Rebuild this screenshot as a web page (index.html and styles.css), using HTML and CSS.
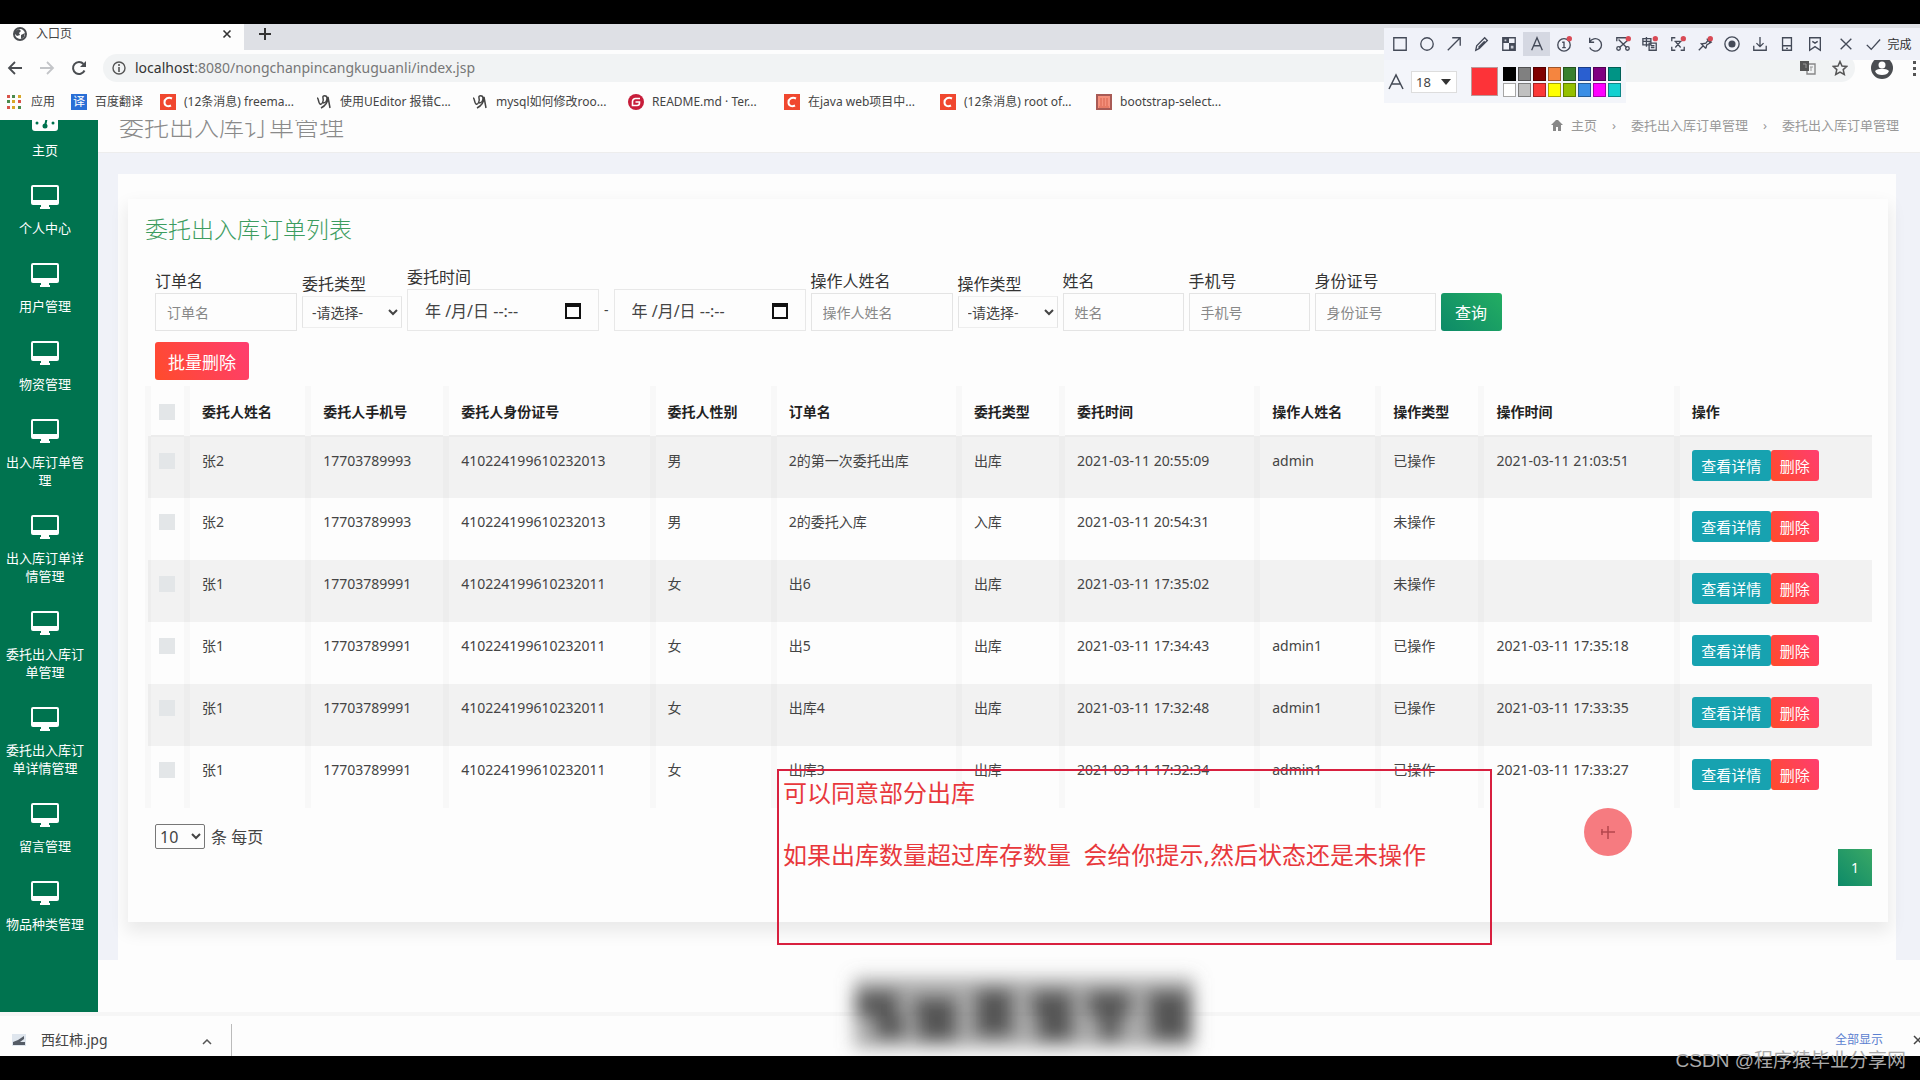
FILE: index.html
```html
<!DOCTYPE html>
<html lang="zh-CN">
<head>
  <meta charset="UTF-8" />
  <meta name="viewport" content="width=device-width, initial-scale=1.0"/>
  <title>入口页</title>
  <link rel="stylesheet" href="styles.css">
</head>
<body>
  <!-- shared icons -->
  <svg width="0" height="0" class="defs" aria-hidden="true">
    <symbol id="monitor" viewBox="0 0 28 24">
      <path fill="#fff" fill-rule="evenodd" d="M2 0h24a2 2 0 0 1 2 2v16a2 2 0 0 1-2 2h-8v2h1v2H9v-2h1v-2H2a2 2 0 0 1-2-2V2a2 2 0 0 1 2-2zm0 2v13h24V2z"/>
    </symbol>
    <symbol id="csdn" viewBox="0 0 16 16">
      <rect width="16" height="16" fill="#f0472f"/>
      <path d="M12 4.500C8 2.500 4.500 5 4.500 8.500S8 13 11 11.500" fill="none" stroke="#fff" stroke-width="2"/>
    </symbol>
    <symbol id="scribble" viewBox="0 0 16 16">
      <path d="M1 4c2 0 1 5 3 6s4-3 3-6 4-3 4 0-2 5-4 5M5 14C9 12 12 8 12 3l2 11" fill="none" stroke="#444" stroke-width="1.500"/>
    </symbol>
  </svg>

  <div class="letterbox"></div>

  <header class="browser">
    <div class="tabs">
      <div class="tab">
        <svg width="14" height="14" viewBox="0 0 14 14"><circle cx="7" cy="7" r="6" fill="#fff" stroke="#4a4d51" stroke-width="2"/><path d="M2 4l4-2 2 2-2 2 1 2-3 1-2-2zM8 8l4-2-1 4-3 2z" fill="#4a4d51"/></svg>
        <span>入口页</span>
        <button class="tab-close" aria-label="关闭标签"><svg width="10" height="10" viewBox="0 0 10 10"><path d="M1.500 1.500l7 7M8.500 1.500l-7 7" stroke="#333" stroke-width="1.600"/></svg></button>
      </div>
      <button class="tab-new" aria-label="新标签"><svg width="14" height="14" viewBox="0 0 14 14"><path d="M7 1v12M1 7h12" stroke="#333" stroke-width="2"/></svg></button>
    </div>
    <div class="toolbar">
      <button aria-label="后退"><svg width="16" height="16" viewBox="0 0 16 16"><path d="M15 8H2M8 2L2 8l6 6" fill="none" stroke="#4a4d51" stroke-width="1.800"/></svg></button>
      <button aria-label="前进"><svg width="16" height="16" viewBox="0 0 16 16"><path d="M1 8h13M8 2l6 6-6 6" fill="none" stroke="#c3c5c8" stroke-width="1.800"/></svg></button>
      <button aria-label="刷新"><svg width="16" height="16" viewBox="0 0 16 16"><path d="M13.500 10.500A6 6 0 1 1 12.500 4" fill="none" stroke="#4a4d51" stroke-width="2"/><path d="M15 1v6H9z" fill="#4a4d51"/></svg></button>
      <div class="address">
        <svg width="14" height="14" viewBox="0 0 14 14"><circle cx="7" cy="7" r="6" fill="none" stroke="#555" stroke-width="1.400"/><path d="M7 6v5M7 3v2" stroke="#555" stroke-width="1.600"/></svg>
        <span><b>localhost</b>:8080/nongchanpincangkuguanli/index.jsp</span>
        <div class="address-actions">
          <svg width="16" height="16" viewBox="0 0 16 16"><rect x="0" y="1" width="9" height="10" fill="#555"/><path d="M9 4h6v10H7v-3" fill="none" stroke="#888" stroke-width="1.400"/><path d="M3 4h3v4M10 7h3M11 7v4" stroke="#999" fill="none"/></svg>
          <svg width="16" height="16" viewBox="0 0 16 16"><path d="M8 1.500l2 4.500 4.800.4-3.600 3.200 1.100 4.900L8 12l-4.300 2.500 1.100-4.900L1.200 6.400 6 6z" fill="none" stroke="#555" stroke-width="1.500"/></svg>
        </div>
      </div>
      <div class="toolbar-right">
        <svg width="22" height="22" viewBox="0 0 22 22"><circle cx="11" cy="11" r="11" fill="#4a4d51"/><circle cx="11" cy="8" r="3.500" fill="#fff"/><path d="M4 14c3-3 11-3 14 0-1 3-4 4-7 4s-6-1-7-4z" fill="#fff"/></svg>
        <svg width="4" height="16" viewBox="0 0 4 16"><path d="M0 1h3v3H0zM0 7h3v3H0zM0 13h3v3H0z" fill="#555"/></svg>
      </div>
    </div>
    <nav class="bookmarks">
      <a class="bm-apps" href="#"><svg width="14" height="14" viewBox="0 0 14 14"><path d="M0 0h3v3H0zM0 11h3v3H0zM11 5h3v3h-3z" fill="#d9534a"/><path d="M5 0h3v3H5zM0 5h3v3H0zM11 11h3v3h-3z" fill="#4a8a4c"/><path d="M11 0h3v3h-3zM5 5h3v3H5zM5 11h3v3H5z" fill="#d8a728"/></svg>应用</a>
      <a class="bm-fanyi" href="#"><span class="fanyi">译</span>百度翻译</a>
      <a href="#"><svg width="16" height="16"><use href="#csdn"/></svg>(12条消息) freema...</a>
      <a href="#"><svg width="16" height="16"><use href="#scribble"/></svg>使用UEditor 报错C...</a>
      <a href="#"><svg width="16" height="16"><use href="#scribble"/></svg>mysql如何修改roo...</a>
      <a href="#"><svg width="16" height="16" viewBox="0 0 16 16"><circle cx="8" cy="8" r="8" fill="#c71d3a"/><path d="M12 4.500H7.500a3 3 0 0 0-3 3v4H9a2.500 2.500 0 0 0 2.500-2.500V8H7.500" fill="none" stroke="#fff" stroke-width="1.600"/></svg>README.md · Ter...</a>
      <a href="#"><svg width="16" height="16"><use href="#csdn"/></svg>在java web项目中...</a>
      <a href="#"><svg width="16" height="16"><use href="#csdn"/></svg>(12条消息) root of...</a>
      <a href="#"><svg width="16" height="16" viewBox="0 0 16 16"><rect x="1" y="1" width="14" height="14" fill="#f5907c" stroke="#a85a55" stroke-width="2"/><path d="M5 4v8M8 4v8M11 4v8M3 13h10" stroke="#d8644f"/></svg>bootstrap-select...</a>
    </nav>
  </header>

  <div class="page">
    <nav class="sidebar">
      <a href="#"><svg width="26" height="24" viewBox="0 0 26 24"><path d="M3 0h20a3 3 0 0 1 3 3v18a3 3 0 0 1-3 3H3a3 3 0 0 1-3-3V3a3 3 0 0 1 3-3z" fill="#fff"/><path d="M13 19l2-9" stroke="#00734f" stroke-width="2"/><circle cx="13" cy="19" r="2.500" fill="#00734f"/><circle cx="5" cy="16" r="1.500" fill="#00734f"/><circle cx="21" cy="16" r="1.500" fill="#00734f"/></svg>主页</a>
      <a href="#"><svg width="28" height="24"><use href="#monitor"/></svg>个人中心</a>
      <a href="#"><svg width="28" height="24"><use href="#monitor"/></svg>用户管理</a>
      <a href="#"><svg width="28" height="24"><use href="#monitor"/></svg>物资管理</a>
      <a href="#"><svg width="28" height="24"><use href="#monitor"/></svg>出入库订单管理</a>
      <a href="#"><svg width="28" height="24"><use href="#monitor"/></svg>出入库订单详情管理</a>
      <a href="#"><svg width="28" height="24"><use href="#monitor"/></svg>委托出入库订单管理</a>
      <a href="#"><svg width="28" height="24"><use href="#monitor"/></svg>委托出入库订单详情管理</a>
      <a href="#"><svg width="28" height="24"><use href="#monitor"/></svg>留言管理</a>
      <a href="#"><svg width="28" height="24"><use href="#monitor"/></svg>物品种类管理</a>
    </nav>

    <main class="main">
      <div class="page-head">
        <h1>委托出入库订单管理</h1>
        <div class="breadcrumb">
          <a href="#"><svg width="12" height="12" viewBox="0 0 12 12"><path d="M6 0l6 6h-2v6H7V8H5v4H2V6H0z" fill="#888"/></svg>主页</a>
          <i>›</i>
          <a href="#">委托出入库订单管理</a>
          <i>›</i>
          <span>委托出入库订单管理</span>
        </div>
      </div>

      <div class="content">
        <section class="card">
          <h2>委托出入库订单列表</h2>

          <form class="filters">
            <div class="field"><label for="ddm">订单名</label><input id="ddm" type="text" placeholder="订单名"></div>
            <div class="field field-select"><label for="wtlx">委托类型</label><select id="wtlx"><option>-请选择-</option></select></div>
            <div class="field field-date">
              <label for="sj1">委托时间</label>
              <div class="date-row">
                <div class="date-box"><input id="sj1" type="text" value="年 /月/日 --:--"><svg width="16" height="18" viewBox="0 0 16 18"><path d="M1 4h14v13H1z" fill="none" stroke="#111" stroke-width="2"/><path d="M0 2h16v4H0z" fill="#111"/></svg></div>
                <span>-</span>
                <div class="date-box"><input aria-label="委托时间止" type="text" value="年 /月/日 --:--"><svg width="16" height="18" viewBox="0 0 16 18"><path d="M1 4h14v13H1z" fill="none" stroke="#111" stroke-width="2"/><path d="M0 2h16v4H0z" fill="#111"/></svg></div>
              </div>
            </div>
            <div class="field"><label for="czr">操作人姓名</label><input id="czr" type="text" placeholder="操作人姓名"></div>
            <div class="field field-select"><label for="czlx">操作类型</label><select id="czlx"><option>-请选择-</option></select></div>
            <div class="field field-short"><label for="xm">姓名</label><input id="xm" type="text" placeholder="姓名"></div>
            <div class="field field-short"><label for="sjh">手机号</label><input id="sjh" type="text" placeholder="手机号"></div>
            <div class="field field-short"><label for="sfz">身份证号</label><input id="sfz" type="text" placeholder="身份证号"></div>
            <button type="button" class="btn btn-search">查询</button>
          </form>
          <button type="button" class="btn btn-batch">批量删除</button>

          <table class="orders">
            <colgroup>
              <col class="c-check"><col class="c-name"><col class="c-phone"><col class="c-idcard"><col class="c-name"><col class="c-order"><col class="c-type"><col class="c-time"><col class="c-name"><col class="c-type"><col class="c-time"><col class="c-time">
            </colgroup>
            <thead>
              <tr><th><input type="checkbox" aria-label="全选"></th><th>委托人姓名</th><th>委托人手机号</th><th>委托人身份证号</th><th>委托人性别</th><th>订单名</th><th>委托类型</th><th>委托时间</th><th>操作人姓名</th><th>操作类型</th><th>操作时间</th><th>操作</th></tr>
            </thead>
            <tbody>
              <tr><td><input type="checkbox" aria-label="选择"></td><td>张2</td><td>17703789993</td><td>410224199610232013</td><td>男</td><td>2的第一次委托出库</td><td>出库</td><td>2021-03-11 20:55:09</td><td>admin</td><td>已操作</td><td>2021-03-11 21:03:51</td><td class="ops"><button class="btn btn-view">查看详情</button><button class="btn btn-del">删除</button></td></tr>
              <tr><td><input type="checkbox" aria-label="选择"></td><td>张2</td><td>17703789993</td><td>410224199610232013</td><td>男</td><td>2的委托入库</td><td>入库</td><td>2021-03-11 20:54:31</td><td></td><td>未操作</td><td></td><td class="ops"><button class="btn btn-view">查看详情</button><button class="btn btn-del">删除</button></td></tr>
              <tr><td><input type="checkbox" aria-label="选择"></td><td>张1</td><td>17703789991</td><td>410224199610232011</td><td>女</td><td>出6</td><td>出库</td><td>2021-03-11 17:35:02</td><td></td><td>未操作</td><td></td><td class="ops"><button class="btn btn-view">查看详情</button><button class="btn btn-del">删除</button></td></tr>
              <tr><td><input type="checkbox" aria-label="选择"></td><td>张1</td><td>17703789991</td><td>410224199610232011</td><td>女</td><td>出5</td><td>出库</td><td>2021-03-11 17:34:43</td><td>admin1</td><td>已操作</td><td>2021-03-11 17:35:18</td><td class="ops"><button class="btn btn-view">查看详情</button><button class="btn btn-del">删除</button></td></tr>
              <tr><td><input type="checkbox" aria-label="选择"></td><td>张1</td><td>17703789991</td><td>410224199610232011</td><td>女</td><td>出库4</td><td>出库</td><td>2021-03-11 17:32:48</td><td>admin1</td><td>已操作</td><td>2021-03-11 17:33:35</td><td class="ops"><button class="btn btn-view">查看详情</button><button class="btn btn-del">删除</button></td></tr>
              <tr><td><input type="checkbox" aria-label="选择"></td><td>张1</td><td>17703789991</td><td>410224199610232011</td><td>女</td><td>出库3</td><td>出库</td><td>2021-03-11 17:32:34</td><td>admin1</td><td>已操作</td><td>2021-03-11 17:33:27</td><td class="ops"><button class="btn btn-view">查看详情</button><button class="btn btn-del">删除</button></td></tr>
            </tbody>
          </table>

          <div class="page-size">
            <select id="size"><option>10</option></select>
            <label for="size">条 每页</label>
          </div>
          <div class="pager"><a href="#">1</a></div>
        </section>
      </div>
    </main>
  </div>

  <footer class="downloads">
    <div class="download-item">
      <svg width="14" height="12" viewBox="0 0 14 12"><rect width="14" height="12" fill="#dfe6ee"/><path d="M1 11V8l5-2 6-4v3L8 8h5v3z" fill="#555c66"/></svg>
      <span>西红柿.jpg</span>
      <button aria-label="更多"><svg width="10" height="6" viewBox="0 0 10 6"><path d="M1 5l4-4 4 4" fill="none" stroke="#555" stroke-width="1.500"/></svg></button>
    </div>
    <a class="show-all" href="#">全部显示</a>
    <button class="download-close" aria-label="关闭"><svg width="10" height="10" viewBox="0 0 10 10"><path d="M1 1l8 8M9 1L1 9" stroke="#444" stroke-width="1.500"/></svg></button>
  </footer>
  <div class="letterbox"></div>

  <!-- capture tool floating over the browser -->
  <div class="capture">
    <div class="capture-tools">
      <button aria-label="矩形"><svg viewBox="0 0 18 18"><path d="M2 2h14v14H2z"/></svg></button>
      <button aria-label="椭圆"><svg viewBox="0 0 18 18"><circle cx="9" cy="9" r="7"/></svg></button>
      <button aria-label="箭头"><svg viewBox="0 0 18 18"><path d="M2 16L16 2M7 2h9v9"/></svg></button>
      <button aria-label="画笔"><svg viewBox="0 0 18 18"><path d="M2 16l1-5 9-9 3 3-9 9zM5 13l7-7"/></svg></button>
      <button aria-label="马赛克"><svg viewBox="0 0 18 18"><path d="M2 2h14v14H2z"/><path d="M2 2h7v6H2zM9 8h7v8H9z" class="solid"/><path d="M4 4h2v2H4zM11 11h3v3h-3z" class="hole"/></svg></button>
      <button aria-label="文字" class="active"><svg viewBox="0 0 18 18"><path d="M3 16L9 2l6 14M5 11h8"/></svg></button>
      <button aria-label="序号"><svg viewBox="0 0 18 18"><circle cx="9" cy="10" r="7"/><path d="M7 7h2v6M7 13h4"/><circle cx="15" cy="3" r="3" class="dot"/></svg></button>
      <span class="sep"></span>
      <button aria-label="撤销"><svg viewBox="0 0 18 18"><path d="M3 2v5h5M3 7a7 7 0 1 1 0 6"/></svg></button>
      <button aria-label="裁剪"><svg viewBox="0 0 18 18"><path d="M2 6V2h11M4 4l9 9M14 5l-9 8"/><circle cx="4" cy="14" r="2"/><circle cx="14" cy="14" r="2"/><circle cx="15" cy="3" r="3" class="dot"/></svg></button>
      <button aria-label="翻译"><svg viewBox="0 0 18 18"><path d="M1 3h9v7H1zM1 6h9M5 1v11M8 8h8v8H8zM10 11h4M10 13h4"/><circle cx="15" cy="3" r="3" class="dot"/></svg></button>
      <button aria-label="识别"><svg viewBox="0 0 18 18"><path d="M2 6V2h4M2 12v4h4M12 16h4v-4M5 6h8M6 13l6-7M6 6l6 7"/><circle cx="15" cy="3" r="3" class="dot"/></svg></button>
      <button aria-label="钉住"><svg viewBox="0 0 18 18"><path d="M2 16l5-5M4 8l6 6M5 9l5-1 3-4 3 3-5 3-1 4M11 3l4 5"/><circle cx="15" cy="3" r="3" class="dot"/></svg></button>
      <button aria-label="录制"><svg viewBox="0 0 18 18"><circle cx="9" cy="9" r="8"/><circle cx="9" cy="9" r="4" class="solid"/></svg></button>
      <button aria-label="保存"><svg viewBox="0 0 18 18"><path d="M9 1v11M5 8l4 4 4-4M2 11v5h14v-5"/></svg></button>
      <button aria-label="手机"><svg viewBox="0 0 18 18"><path d="M4 2h10v14H4zM4 11h10M8 14h2"/></svg></button>
      <button aria-label="收藏"><svg viewBox="0 0 18 18"><path d="M3 2h12v14l-6-4-6 4zM6 6l3 2 3-2"/></svg></button>
      <span class="sep"></span>
      <button aria-label="取消"><svg viewBox="0 0 18 18"><path d="M3 3l12 12M15 3L3 15"/></svg></button>
      <button aria-label="确认"><svg viewBox="0 0 18 18"><path d="M2 10l5 5L17 4"/></svg></button>
      <button class="done">完成</button>
    </div>
    <div class="capture-style">
      <svg width="18" height="18" viewBox="0 0 18 18"><path d="M2 16L9 2l7 14M5 11h8" fill="none" stroke="#444a55" stroke-width="1.500"/></svg>
      <div class="size-box">
        <select aria-label="字号"><option>18</option></select>
        <svg width="10" height="6" viewBox="0 0 10 6"><path d="M0 0h10L5 6z" fill="#333"/></svg>
      </div>
      <span class="current"></span>
      <div class="palette">
        <button class="k1" aria-label="黑"></button><button class="k2" aria-label="灰"></button><button class="k3" aria-label="深红"></button><button class="k4" aria-label="橙"></button><button class="k5" aria-label="绿"></button><button class="k6" aria-label="蓝"></button><button class="k7" aria-label="紫"></button><button class="k8" aria-label="青"></button>
        <button class="k9" aria-label="白"></button><button class="k10" aria-label="浅灰"></button><button class="k11" aria-label="红"></button><button class="k12" aria-label="黄"></button><button class="k13" aria-label="黄绿"></button><button class="k14" aria-label="浅蓝"></button><button class="k15" aria-label="洋红"></button><button class="k16" aria-label="浅青"></button>
      </div>
    </div>
  </div>

  <div class="note">
    <p>可以同意部分出库</p>
    <p>如果出库数量超过库存数量&nbsp; 会给你提示,然后状态还是未操作</p>
  </div>

  <svg class="pointer" width="48" height="48" viewBox="0 0 48 48"><circle cx="24" cy="24" r="24" fill="#f67b80"/><path d="M17 24h14M24 18v13M18 21v6" stroke="#b5474c" stroke-width="1.500" fill="none"/></svg>

  <svg class="smudge" width="400" height="106" viewBox="0 0 400 106">
    <filter id="soft" x="-20%" y="-40%" width="140%" height="180%"><feGaussianBlur stdDeviation="9"/></filter>
    <g filter="url(#soft)" fill="#555">
      <rect x="30" y="28" width="340" height="70" fill="#777" opacity=".6"/>
      <path d="M32 42h42v24h6v22H52V66H32z"/>
      <path d="M90 48h42v42H94V66h-4z"/>
      <path d="M152 40h36v46h-36z"/>
      <path d="M208 42h40v48h-34V66h-6z"/>
      <path d="M264 42h42v24h-42zM276 66h20v24h-20z"/>
      <path d="M324 42h42v48h-38z"/>
    </g>
  </svg>

  <div class="watermark">CSDN @程序猿毕业分享网</div>
</body>
</html>
```

FILE: styles.css
```css
* {
  box-sizing: border-box;
}

body {
  margin: 0;
  height: 100vh;
  display: flex;
  flex-direction: column;
  position: relative;
  overflow: hidden;
  background: #fdfdfd;
  color: #444;
  font-family: "Noto Sans", "Noto Sans CJK SC", sans-serif;
  font-size: 14px;
  line-height: 18px;
}

a {
  color: inherit;
  text-decoration: none;
}

button {
  border: none;
  background: none;
  padding: 0;
  font-family: inherit;
  cursor: pointer;
}

input,
select {
  font-family: inherit;
  color: inherit;
}

svg {
  flex: none;
}

.defs {
  position: absolute;
}

.letterbox {
  height: 24px;
  flex: none;
  background: #000;
}

/* browser */
.browser {
  flex: none;
  background: #fdfdfd;
}

.tabs {
  display: flex;
  height: 26px;
  background: #dee0e5;
}

.tab {
  width: 244px;
  padding: 0 12px 6px 13px;
  display: flex;
  align-items: center;
  gap: 9px;
  background: #fdfdfd;
  font-size: 12px;
}

.tab-close {
  margin-left: auto;
}

.tab-close svg,
.tab-new svg {
  display: block;
}

.tab-new {
  padding: 0 14px 6px;
}

.toolbar {
  display: flex;
  align-items: center;
  height: 36px;
  padding-left: 7px;
  gap: 16px;
}

.toolbar button svg {
  display: block;
}

.address {
  flex: 1;
  display: flex;
  align-items: center;
  gap: 9px;
  height: 28px;
  padding: 0 7px 0 9px;
  border-radius: 14px;
  background: #f1f3f4;
  color: #777;
  font-size: 14px;
}

.address b {
  font-weight: normal;
  color: #333;
}

.address-actions {
  display: flex;
  gap: 16px;
  margin-left: auto;
}

.toolbar-right {
  display: flex;
  align-items: center;
  gap: 20px;
  padding-right: 3px;
}

.bookmarks {
  display: flex;
  align-items: center;
  height: 34px;
  padding: 0 0 2px 7px;
  font-size: 12px;
  white-space: nowrap;
}

.bookmarks a {
  display: flex;
  align-items: center;
  gap: 8px;
  width: 156px;
}

.bookmarks .bm-apps {
  width: 64px;
  gap: 10px;
}

.bookmarks .bm-fanyi {
  width: 89px;
}

.fanyi {
  width: 16px;
  height: 16px;
  line-height: 16px;
  background: #2a6fd6;
  color: #fff;
  text-align: center;
}

/* page */
.page {
  flex: 1;
  min-height: 0;
  display: flex;
  overflow: hidden;
}

.sidebar {
  flex: none;
  width: 98px;
  background: #00734f;
}

.sidebar a {
  display: flex;
  flex-direction: column;
  align-items: center;
  gap: 10px;
  padding: 0 13px 26px 5px;
  color: #fff;
  font-size: 13px;
  text-align: center;
}

/* list is scrolled a little, the first icon is cut by the top edge */
.sidebar a:first-child {
  margin-top: -13px;
}

.main {
  flex: 1;
  min-width: 0;
}

.page-head {
  display: flex;
  justify-content: space-between;
  align-items: flex-end;
  height: 33px;
  padding: 0 21px 12px;
  border-bottom: 1px solid #ededed;
}

.page-head h1 {
  margin: 0;
  font-size: 25px;
  line-height: 28px;
  font-weight: 300;
  color: #8a8a8a;
}

.breadcrumb {
  display: flex;
  align-items: center;
  gap: 15px;
  padding-bottom: 6px;
  font-size: 13px;
  color: #999;
}

.breadcrumb a {
  display: flex;
  align-items: center;
  gap: 8px;
}

.breadcrumb i {
  font-style: normal;
}

.content {
  border: solid #f0f2f8;
  border-width: 21px 24px 0 20px;
  padding: 25px 8px 38px 10px;
}

.card {
  padding: 15px 16px 36px 17px;
  background: #fdfdfd;
  box-shadow: 0 8px 16px 2px rgba(0, 0, 0, 0.08);
}

.card h2 {
  margin: 0 0 21px;
  font-size: 23px;
  line-height: 30px;
  font-weight: 300;
  color: #3c9c60;
}

.filters {
  display: flex;
  align-items: flex-end;
  gap: 5px;
  padding-left: 10px;
}

.field {
  display: flex;
  flex-direction: column;
  width: 142px;
}

.field label {
  font-size: 16px;
  line-height: 24px;
  color: #333;
}

.field input,
.field select {
  width: 100%;
  height: 38px;
  padding: 0 11px;
  border: 1px solid #e4e4e4;
  background: #fdfdfd;
  font-size: 14px;
}

.field input::placeholder {
  color: #888;
}

.field-short {
  width: 121px;
}

.field-select {
  width: 100px;
  padding-bottom: 3px;
}

.field-select select {
  height: 32px;
  padding: 0 0 0 5px;
  border-color: #eee #e4e4e4;
}

.field-date {
  width: auto;
}

.date-row {
  display: flex;
  align-items: center;
  gap: 5px;
}

.date-box {
  display: flex;
  align-items: center;
  width: 192px;
  height: 42px;
  padding: 0 17px;
  border: 1px solid #e8e8e8;
}

.field .date-box input {
  flex: 1;
  min-width: 0;
  padding: 0;
  border: none;
  font-size: 16px;
}

.btn {
  border-radius: 3px;
  color: #fff;
}

.btn-search {
  width: 61px;
  height: 38px;
  font-size: 16px;
  background: linear-gradient(45deg, #0d8a68, #23ad62);
}

.btn-batch {
  display: block;
  height: 38px;
  margin: 11px 0 6px 10px;
  padding: 0 13px;
  font-size: 17px;
  background: linear-gradient(60deg, #ff4b2b, #ff3d70);
}

.orders {
  width: 100%;
  table-layout: fixed;
  border-collapse: collapse;
}

.c-check { width: 39px; }
.c-name { width: 121px; }
.c-phone { width: 138px; }
.c-idcard { width: 206px; }
.c-order { width: 185px; }
.c-type { width: 103px; }
.c-time { width: 195px; }

.orders th,
.orders td {
  height: 62px;
  padding: 15px 0 0 12px;
  border-left: 6px solid rgba(0, 0, 0, 0.02);
  text-align: left;
  vertical-align: top;
  white-space: nowrap;
}

.orders th {
  height: 50px;
  padding-top: 17px;
  border-bottom: 2px solid #ececec;
  color: #222;
  font-weight: bold;
}

.orders th:first-child,
.orders td:first-child {
  padding-left: 8px;
}

.orders tbody tr:nth-child(odd) {
  background: #f2f2f2;
}

.orders input {
  display: block;
  appearance: none;
  width: 16px;
  height: 16px;
  margin: 1px 0 0;
  background: #e3e6e8;
}

.orders .ops {
  padding-top: 13px;
  font-size: 0;
}

.btn-view,
.btn-del {
  height: 31px;
  font-size: 15px;
}

.btn-view {
  width: 79px;
  background: #17a2b0;
}

.btn-del {
  width: 48px;
  background: linear-gradient(60deg, #ff4b2b, #ff3d70);
}

.page-size {
  display: flex;
  align-items: center;
  gap: 6px;
  margin: 16px 0 0 10px;
  font-size: 16px;
}

.page-size select {
  width: 50px;
  height: 25px;
  border: 1px solid #777;
  border-radius: 2px;
  background: #fdfdfd;
  font-size: 16px;
}

.pager {
  display: flex;
  justify-content: flex-end;
}

.pager a {
  width: 34px;
  height: 37px;
  line-height: 37px;
  background: linear-gradient(45deg, #0d8a68, #3aa866);
  color: #fff;
  text-align: center;
}

/* downloads */
.downloads {
  flex: none;
  display: flex;
  align-items: center;
  height: 44px;
  border-top: 4px solid #f6f6f6;
}

.download-item {
  display: flex;
  align-items: center;
  gap: 15px;
  width: 232px;
  height: 32px;
  margin-top: 8px;
  padding: 0 19px 0 12px;
  border-right: 1px solid #bbb;
}

.download-item button {
  margin-left: auto;
}

.show-all {
  margin-left: auto;
  margin-right: 30px;
  margin-top: 8px;
  color: #5b7fd0;
  font-size: 12px;
}

.download-close {
  width: 7px;
  margin-top: 8px;
  overflow: hidden;
}

/* capture tool */
.capture {
  position: absolute;
  top: 28px;
  right: 0;
  width: 536px;
}

.capture-tools {
  display: flex;
  align-items: center;
  height: 32px;
  padding: 0 8px 0 2px;
  background: #f0f2f9;
}

.capture-tools button {
  flex: 1;
  height: 24px;
}

.capture-tools .active {
  background: #d5d8e2;
}

.capture-tools .done {
  flex: none;
  width: 25px;
  font-size: 12px;
  color: #333;
}

.capture-tools svg {
  display: block;
  width: 16px;
  height: 16px;
  margin: auto;
  fill: none;
  stroke: #444a58;
  stroke-width: 1.5;
}

.capture-tools .solid {
  fill: #444a58;
  stroke: none;
}

.capture-tools .hole {
  fill: #c9ccd6;
  stroke: none;
}

.capture-tools .dot {
  fill: #d94a55;
  stroke: none;
}

.sep {
  width: 4px;
}

.capture-style {
  display: flex;
  align-items: center;
  width: 242px;
  height: 43px;
  padding-left: 3px;
  background: #f3f5fa;
}

.size-box {
  display: flex;
  align-items: center;
  width: 46px;
  height: 22px;
  margin: 0 14px 0 6px;
  padding: 0 5px 0 4px;
  border: 1px solid #ddd;
  background: #fff;
}

.size-box select {
  flex: 1;
  min-width: 0;
  appearance: none;
  border: none;
  padding: 0;
  background: none;
  font-size: 13px;
}

.current {
  width: 27px;
  height: 29px;
  margin-right: 5px;
  border: 1px solid #b99;
  background: #fd3338;
}

.palette {
  display: grid;
  grid-template-columns: repeat(8, 13px);
  gap: 2px;
}

.palette button {
  height: 14px;
  border: 1px solid rgba(0, 0, 0, 0.35);
}

.k1 { background: #000; }
.k2 { background: #808080; }
.k3 { background: #800000; }
.k4 { background: #f5853f; }
.k5 { background: #38802d; }
.k6 { background: #2a5fd0; }
.k7 { background: #800080; }
.k8 { background: #009485; }
.k9 { background: #fff; }
.k10 { background: #c0c0c0; }
.k11 { background: #fb3838; }
.k12 { background: #ff0; }
.k13 { background: #94c000; }
.k14 { background: #3a8ee6; }
.k15 { background: #f0f; }
.k16 { background: #13d0d0; }

/* drawn over the page */
.note {
  position: absolute;
  left: 777px;
  top: 769px;
  width: 715px;
  height: 176px;
  padding: 7px 4px;
  border: 2px solid #d8203f;
  color: #e8383c;
  font-size: 24px;
  line-height: 30px;
}

.note p {
  margin: 0 0 32px;
}

.pointer {
  position: absolute;
  left: 1584px;
  top: 808px;
}

.smudge {
  position: absolute;
  left: 824px;
  top: 950px;
}

.watermark {
  position: absolute;
  right: 14px;
  bottom: 7px;
  color: #aaa;
  font-family: "Liberation Sans", "Noto Sans CJK SC", sans-serif;
  font-size: 19px;
  line-height: 24px;
}
```
